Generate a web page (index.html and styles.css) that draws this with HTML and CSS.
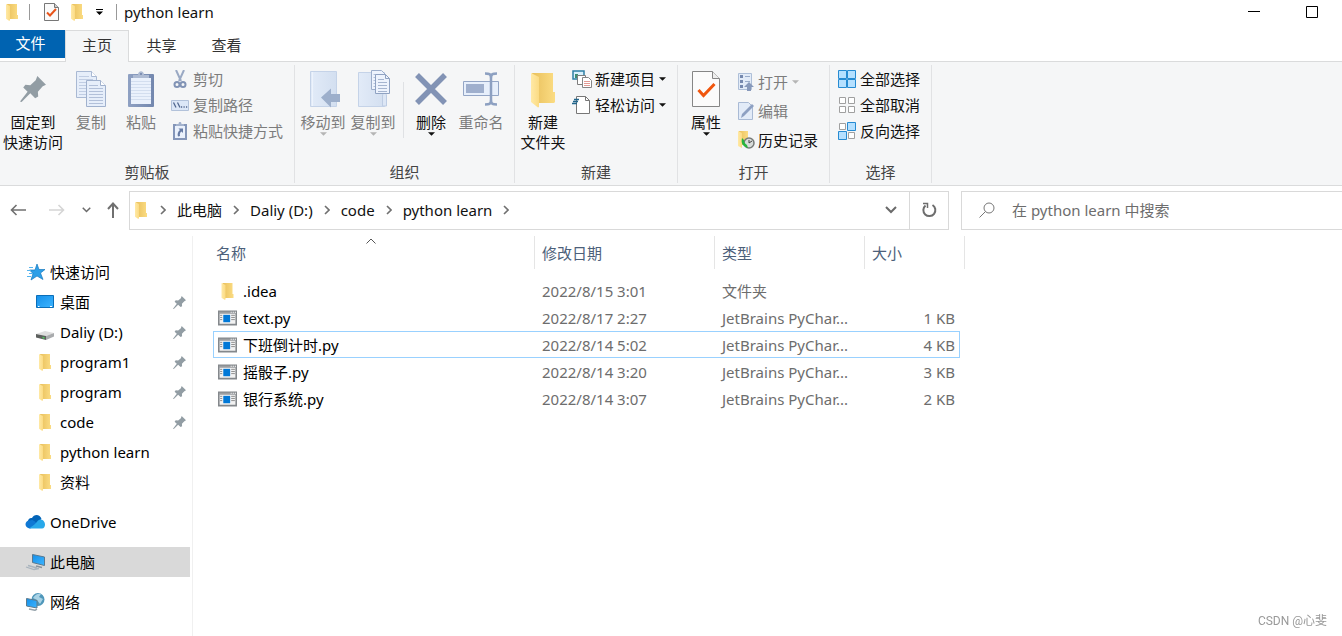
FILE: index.html
```html
<!DOCTYPE html>
<html lang="zh-CN">
<head>
<meta charset="utf-8">
<title>python learn</title>
<meta name="viewport" content="width=device-width, initial-scale=1">
<link rel="stylesheet" href="styles.css">
</head>
<body>
<svg class="sprite" width="0" height="0" aria-hidden="true">
  <defs>
    <linearGradient id="gFront" x1="0" x2="1"><stop offset="0" stop-color="#ffe9a6"/><stop offset="1" stop-color="#fbdb83"/></linearGradient>
    <linearGradient id="gBack" x1="0" x2="1"><stop offset="0" stop-color="#e9c05c"/><stop offset="1" stop-color="#fbdc83"/></linearGradient>
    <linearGradient id="gBlue" x1="0" y1="0" x2="1" y2="1"><stop offset="0" stop-color="#1590ea"/><stop offset="1" stop-color="#3cb4ff"/></linearGradient>
    <linearGradient id="gPale" x1="0" x2="1"><stop offset="0" stop-color="#e2ebf8"/><stop offset="1" stop-color="#d3dff0"/></linearGradient>
    <linearGradient id="gClip" x1="0" x2="1"><stop offset="0" stop-color="#8fa1c3"/><stop offset="1" stop-color="#7387ae"/></linearGradient>
    <symbol id="folder" viewBox="0 0 14 18">
      <path d="M2 1h10v11h1v4H4z" fill="url(#gBack)"/>
      <path d="M1 1l4 2v14.500l-1 .3-3-2z" fill="url(#gFront)"/>
    </symbol>
    <symbol id="pin" viewBox="0 0 24 24">
      <path d="M16 0l8 8-3 1.500-4.500 5 .3 4.500-2.800 1.500-4.500-4.500L1.500 24 0 23.500l7-9L3 10.500l2-2.500 4.500.5 5-4.500z" fill="#929da4"/>
    </symbol>
    <symbol id="pyfile" viewBox="0 0 18 14">
      <path d="M.75.75h16.500v12.500H.75z" fill="#f2f2f2" stroke="#84888c" stroke-width="1.500"/>
      <path d="M1 1h16v2H1z" fill="#9b9ea1"/><path d="M12 1h1v1h-1zm2 0h1v1h-1zm2 0h1v1h-1z" fill="#fff"/>
      <path d="M5 4h6.500v7H5z" fill="#0078d7"/>
      <path d="M2 4.500h2M2 6.500h2M2 8.500h2M12.500 4.500H16M12.500 6.500H16M12.500 8.500H16" stroke="#8c8c8c" stroke-width=".9"/>
    </symbol>
    <symbol id="caret" viewBox="0 0 8 4"><path d="M0 0h8L4 4z" fill="currentColor"/></symbol>
    <symbol id="right" viewBox="0 0 6 10"><path d="M1 1l4 4-4 4" fill="none" stroke="#707070" stroke-width="1.600"/></symbol>
    <symbol id="down" viewBox="0 0 12 8"><path d="M1 1l5 5 5-5" fill="none" stroke="#6a6a6a" stroke-width="2"/></symbol>
    <symbol id="check" viewBox="0 0 28 36">
      <path d="M.5.500h20l7 7v28H.5z" fill="#fbfbfb" stroke="#868686"/><path d="M20.500.500v7h7" fill="#eee" stroke="#868686"/>
      <path d="M6.500 19l5 5.500L22.500 13" fill="none" stroke="#f0560e" stroke-width="3"/>
    </symbol>
  </defs>
</svg>

<header class="titlebar">
  <svg class="folder-icon title-folder" aria-hidden="true"><use href="#folder"/></svg>
  <span class="title-sep first-sep"></span>
  <button class="quick" aria-label="属性"><svg width="15" height="18" viewBox="0 0 15 18"><path d="M.5.500h10l4 4v13H.5z" fill="#fafafa" stroke="#777"/><path d="M10.500.500v4h4" fill="#ccc" stroke="#777"/><path d="M3 9.500l3 3 6-6.500" fill="none" stroke="#e8541a" stroke-width="2"/></svg></button>
  <button class="quick quick-folder" aria-label="新建文件夹"><svg class="folder-icon"><use href="#folder"/></svg></button>
  <button class="quick" aria-label="自定义快速访问工具栏"><svg width="7" height="6" viewBox="0 0 7 6"><path d="M0 0h7v1H0zM0 2.500h7L3.500 6z"/></svg></button>
  <span class="title-sep last-sep"></span>
  <h1 class="title">python learn</h1>
  <div class="window-controls">
    <button aria-label="最小化"><svg width="12" height="12"><path d="M0 5.500h12" stroke="#000"/></svg></button>
    <button aria-label="最大化"><svg width="12" height="12"><path d="M.5.500h11v11H.5z" fill="none" stroke="#000"/></svg></button>
  </div>
</header>

<nav class="tabs">
  <button class="tab file">文件</button>
  <button class="tab active">主页</button>
  <button class="tab">共享</button>
  <button class="tab">查看</button>
</nav>

<section class="ribbon">
  <div class="group">
    <div class="tools">
      <button class="big wide"><span class="pic"><svg width="26" height="26" viewBox="0 0 24 24"><use href="#pin"/></svg></span><span>固定到<br>快速访问</span></button>
      <button class="big off"><span class="pic"><svg width="30" height="38" viewBox="0 0 30 38">
        <path d="M.5 1.500h15l5 5v21H.5z" fill="#e6eefa" stroke="#a9b9d3"/><path d="M15.500 1.500v5h5" fill="#fff" stroke="#a9b9d3"/>
        <path d="M3 6.500h10M3 9.500h14M3 12.500h14M3 15.500h7M3 18.500h7M3 21.500h7M3 24.500h7" stroke="#c0cde3"/>
        <path d="M10.500 10.500h14l5 5v21h-19z" fill="#e6eefa" stroke="#a0b1cd"/><path d="M24.500 10.500v5h5" fill="#fff" stroke="#a0b1cd"/>
        <path d="M13 15.500h9M13 18.500h14M13 21.500h14M13 24.500h14M13 27.500h14M13 30.500h14M13 33.500h14" stroke="#b2c0d9"/></svg></span><span>复制</span></button>
      <button class="big off"><span class="pic"><svg width="28" height="38" viewBox="0 0 28 38">
        <rect x="1" y="4" width="26" height="33" rx="1" fill="url(#gClip)"/><path d="M4 8h20v26H4z" fill="#eaf1fc"/>
        <path d="M4 11.500h20M4 14.500h20M4 17.500h20M4 20.500h20M4 23.500h20M4 26.500h20M4 29.500h20" stroke="#d3deef"/>
        <path d="M6 8V5h5c0-5 6-5 6 0h5v3z" fill="#aebbd3"/><circle cx="14" cy="4" r="1" fill="#6f82a8"/></svg></span><span>粘贴</span></button>
      <div class="small-list clip-list">
        <button class="small off"><svg width="18" height="18" viewBox="0 0 18 18"><path d="M5 0l5 11M13 0L8 11" stroke="#9aa9c4" stroke-width="2" fill="none"/><circle cx="6" cy="14.500" r="2.500" fill="none" stroke="#8193b5" stroke-width="2"/><circle cx="12" cy="14.500" r="2.500" fill="none" stroke="#8193b5" stroke-width="2"/></svg>剪切</button>
        <button class="small off"><svg width="18" height="18" viewBox="0 0 18 18"><path d="M.5 4.500h17v10H.5z" fill="#dce7f7" stroke="#b2c2da"/><path d="M2.500 6.500l2.500 5M6.500 6.500l2.500 5M10 11h1.200M12.500 11h1.200M15 11h1.200" stroke="#51678f" stroke-width="1.300"/></svg>复制路径</button>
        <button class="small off"><svg width="18" height="18" viewBox="0 0 18 18"><path d="M2 2h14v16H2z" fill="#8496b9"/><path d="M4 4h10v12H4z" fill="#eaf1fc"/><path d="M5 4V2h2.500c0-3 3-3 3 0H13v2z" fill="#a3b2cd"/><path d="M7.500 6.500H12V11l-1.500-1.500c-1.500 1-2 2.500-1.500 4.500L7 14.500c-1-2.500 0-5 2-6.500z" fill="#667ba4"/></svg>粘贴快捷方式</button>
      </div>
    </div>
    <div class="group-name">剪贴板</div>
  </div>

  <div class="group">
    <div class="tools">
      <button class="big off"><span class="pic"><svg width="34" height="38" viewBox="0 0 34 38"><path d="M4.500 1.500h26v35h-26z" fill="url(#gPale)" stroke="#c5d3e8"/><path d="M6.500 2v34" stroke="#edf3fc"/><path d="M15 27.500l10-9V24h9v8h-9v5.500z" fill="#9dafcb"/></svg></span><span>移动到</span><svg class="caret"><use href="#caret"/></svg></button>
      <button class="big off"><span class="pic"><svg width="34" height="38" viewBox="0 0 34 38"><path d="M2.500 2.500h26v34h-26z" fill="url(#gPale)" stroke="#c5d3e8"/><path d="M26.500 36V26c0-4 4-4 4 0v10z" fill="#dce6f5" stroke="#bdcce3"/>
        <path d="M15.500.500h10l4 4v15h-14z" fill="#edf3fd" stroke="#9caecb"/><path d="M17.500 4.500h7M17.500 7.500h7M17.500 10.500h7M17.500 13.500h7M17.500 16.500h7" stroke="#b3c1d9"/>
        <path d="M19.500 4.500h10l4 4v15h-14z" fill="#edf3fd" stroke="#8fa2c2"/><path d="M29.500 4.500v4h4" fill="none" stroke="#8fa2c2"/><path d="M22 9.500h6M22 12.500h9M22 15.500h9M22 18.500h9M22 21.500h9" stroke="#a5b5d0"/></svg></span><span>复制到</span><svg class="caret"><use href="#caret"/></svg></button>
      <span class="divider"></span>
      <button class="big"><span class="pic"><svg width="32" height="38" viewBox="0 0 32 38"><path d="M2 5l28 28M30 5L2 33" stroke="#8293b5" stroke-width="5.500"/></svg></span><span>删除</span><svg class="caret"><use href="#caret"/></svg></button>
      <button class="big off"><span class="pic"><svg width="38" height="38" viewBox="0 0 38 38"><path d="M1.500 11.500h35v14h-35z" fill="#e7effb" stroke="#94a6c6"/><path d="M4 14h18v9H4z" fill="#9fafcd"/><path d="M23 3.500c4 0 6 0 6 5v21c0 5-2 5-6 5M35 3.500c-4 0-6 0-6 5M35 34.500c-4 0-6 0-6-5" fill="none" stroke="#8da0c1" stroke-width="2.500"/></svg></span><span>重命名</span></button>
    </div>
    <div class="group-name">组织</div>
  </div>

  <div class="group">
    <div class="tools">
      <button class="big"><span class="pic"><svg width="26" height="38" viewBox="0 0 26 38"><path d="M2 3h21v19h2v10l-1 1H7z" fill="url(#gBack)"/><path d="M1 3l8 4v30l-1 .5L1 32z" fill="url(#gFront)"/></svg></span><span>新建<br>文件夹</span></button>
      <div class="small-list new-list">
        <button class="small"><svg width="20" height="18" viewBox="0 0 20 18"><path d="M1 1h11v8H1z" fill="#d9f0fc" stroke="#2c7fa5" stroke-width="1.500"/><path d="M3 4h3v4H3z" fill="#3d8d73"/><path d="M5.500 5.500h8v9h-8z" fill="#fff" stroke="#7d7d7d"/><path d="M10.500 7.500h6l3 3v7h-9z" fill="#fff" stroke="#858585"/><path d="M12 11.500h6M12 13.500h6M12 15.500h6" stroke="#e39a94"/></svg>新建项目<svg class="caret"><use href="#caret"/></svg></button>
        <button class="small"><svg width="20" height="18" viewBox="0 0 20 18"><path d="M4.500.500h9l4 4v13h-13z" fill="#fff" stroke="#777"/><path d="M13.500.500v4h4" fill="none" stroke="#777"/><path d="M2 3.500h5M1 5.500h5M0 7.500h5" stroke="#22668c" stroke-width="1.300"/></svg>轻松访问<svg class="caret"><use href="#caret"/></svg></button>
      </div>
    </div>
    <div class="group-name">新建</div>
  </div>

  <div class="group">
    <div class="tools">
      <button class="big"><span class="pic"><svg width="28" height="36"><use href="#check"/></svg></span><span>属性</span><svg class="caret"><use href="#caret"/></svg></button>
      <div class="small-list open-list">
        <button class="small off"><svg width="18" height="20" viewBox="0 0 18 20"><path d="M1.500 1.500h13v16h-13z" fill="#e2ebf8" stroke="#aebfd8"/><path d="M3 3h3v3H3zM3 8h3v3H3zM3 13h3v3H3z" fill="#7689ae"/><path d="M8 4.500h5M8 9.500h5" stroke="#9aacca"/><path d="M12 10l5 5h-3v4h-4v-4H7z" fill="#8799bb"/></svg>打开<svg class="caret"><use href="#caret"/></svg></button>
        <button class="small off"><svg width="18" height="20" viewBox="0 0 18 20"><path d="M1.500 1.500h10l4 4v13h-14z" fill="#e2ebf8" stroke="#a9bad5"/><path d="M4 17l1-4L15 3l2 2L7 15z" fill="#8da0c2"/></svg>编辑</button>
        <button class="small"><svg width="18" height="20" viewBox="0 0 18 20"><path d="M2 1h9v14H4z" fill="url(#gBack)"/><path d="M1 1l4 2v15l-4-2z" fill="url(#gFront)"/><circle cx="12" cy="13" r="5" fill="#d8dcda" stroke="#777b79" stroke-width="1.500"/><path d="M12 10v3l3-2" fill="none" stroke="#444"/><path d="M5 8c-1 5 0 8 6 10l-1-3c-2-1-3-3-3-5z" fill="#27b53d"/></svg>历史记录</button>
      </div>
    </div>
    <div class="group-name">打开</div>
  </div>

  <div class="group">
    <div class="tools">
      <div class="small-list select-list">
        <button class="small"><svg width="18" height="18" viewBox="0 0 18 18"><path d="M.5.500h8v8h-8zM9.500.500h8v8h-8zM.5 9.500h8v8h-8zM9.500 9.500h8v8h-8z" fill="#b5e0ff" stroke="#268bd2"/></svg>全部选择</button>
        <button class="small"><svg width="18" height="18" viewBox="0 0 18 18"><path d="M1.500 1.500h6v6h-6zM10.500 1.500h6v6h-6zM1.500 10.500h6v6h-6zM10.500 10.500h6v6h-6z" fill="#fff" stroke="#a0a0a0"/></svg>全部取消</button>
        <button class="small"><svg width="18" height="18" viewBox="0 0 18 18"><path d="M1.500 1.500h6v6h-6zM10.500 10.500h6v6h-6z" fill="#fff" stroke="#a0a0a0"/><path d="M9.500.500h8v8h-8zM.5 9.500h8v8h-8z" fill="#b5e0ff" stroke="#268bd2"/></svg>反向选择</button>
      </div>
    </div>
    <div class="group-name">选择</div>
  </div>
</section>

<section class="location">
  <div class="nav-buttons">
    <button aria-label="后退"><svg width="16" height="12" viewBox="0 0 16 12"><path d="M1 6h15M6.500 1L1.500 6l5 5" fill="none" stroke="#707070" stroke-width="1.600"/></svg></button>
    <button aria-label="前进"><svg width="16" height="12" viewBox="0 0 16 12"><path d="M0 6h15M9.500 1l5 5-5 5" fill="none" stroke="#d5d5d5" stroke-width="1.600"/></svg></button>
    <button class="recent" aria-label="最近浏览的位置"><svg width="9" height="6"><use href="#down"/></svg></button>
    <button class="up" aria-label="向上"><svg width="12" height="16" viewBox="0 0 12 16"><path d="M6 16V1.500M1 7l5-5.500L11 7" fill="none" stroke="#707070" stroke-width="2"/></svg></button>
  </div>
  <div class="address">
    <svg class="folder-icon" aria-hidden="true"><use href="#folder"/></svg>
    <svg class="chev"><use href="#right"/></svg><a href="#pc">此电脑</a>
    <svg class="chev"><use href="#right"/></svg><a href="#d">Daliy (D:)</a>
    <svg class="chev"><use href="#right"/></svg><a href="#code">code</a>
    <svg class="chev"><use href="#right"/></svg><a href="#learn">python learn</a>
    <svg class="chev"><use href="#right"/></svg>
    <button class="history" aria-label="以前的位置"><svg width="12" height="8"><use href="#down"/></svg></button>
    <button class="refresh" aria-label="刷新"><svg width="16" height="16" viewBox="0 0 16 16"><path d="M4.500 3.500A6 6 0 1 0 11.500 3" fill="none" stroke="#6d6d6d" stroke-width="2"/><path d="M2 1.500h4.500V6" fill="none" stroke="#6d6d6d" stroke-width="1.500"/></svg></button>
  </div>
  <label class="search">
    <svg width="16" height="16" viewBox="0 0 16 16" aria-hidden="true"><circle cx="10" cy="6" r="5" fill="none" stroke="#777"/><path d="M6.500 9.500L.5 15.500" stroke="#777"/></svg>
    <input type="search" aria-label="搜索" placeholder="在 python learn 中搜索">
  </label>
</section>

<main class="content">
  <nav class="sidebar">
    <a class="item root" href="#quick"><svg class="tree" viewBox="0 0 20 18"><path d="M12 1l2 5.500h6L15.500 10l2.500 6.500-6-3.500-6 4 2-6.500L4.500 7H10z" fill="#2c9fe8" stroke="#1979bd" stroke-width=".7"/><path d="M4 4.500h4M2 7.500h4M4 10.500h4M2 13.500h4" stroke="#55b4ee"/></svg>快速访问</a>
    <a class="item" href="#desktop"><svg class="tree" viewBox="0 0 20 18"><path d="M1.500 2.500h17v12h-17z" fill="url(#gBlue)" stroke="#0b6eb8"/><path d="M3 13.500h1.500M15 13.500h2" stroke="#fff"/></svg><span>桌面</span><svg class="pin"><use href="#pin"/></svg></a>
    <a class="item" href="#d"><svg class="tree" viewBox="0 0 20 18"><path d="M1 11l9-3 9 2-8 3z" fill="#dedede"/><path d="M1 11l10 2v4L1 14.500z" fill="#5d605e"/><path d="M11 13l8-3v3.500L11 17z" fill="#a9abad"/><path d="M7.500 14.500l2 .4" stroke="#51cc5c" stroke-width="1.500"/></svg><span>Daliy (D:)</span><svg class="pin"><use href="#pin"/></svg></a>
    <a class="item" href="#p1"><svg class="tree"><use href="#folder"/></svg><span>program1</span><svg class="pin"><use href="#pin"/></svg></a>
    <a class="item" href="#p"><svg class="tree"><use href="#folder"/></svg><span>program</span><svg class="pin"><use href="#pin"/></svg></a>
    <a class="item" href="#code"><svg class="tree"><use href="#folder"/></svg><span>code</span><svg class="pin"><use href="#pin"/></svg></a>
    <a class="item" href="#learn"><svg class="tree"><use href="#folder"/></svg><span>python learn</span></a>
    <a class="item" href="#data"><svg class="tree"><use href="#folder"/></svg><span>资料</span></a>
    <a class="item root spaced" href="#onedrive"><svg class="tree" viewBox="0 0 20 18"><path d="M3 8c0-2 2-3.500 4-3 2-4 8-4 9.500 1L11 11z" fill="#0364b8"/><path d="M5 15.500C-1 15.500-1 7 5 7.500c2-1 3-.5 5 1l3 4z" fill="#0f78d4"/><path d="M4 15.500c3-2 7-5 9-8 4-3 7 1 7 4 0 2-1 4-3 4z" fill="#28a8ea"/></svg>OneDrive</a>
    <a class="item root spaced selected" href="#pc"><svg class="tree" viewBox="0 0 20 18"><path d="M7.500 1.500l12 2.500v8.500l-12-3z" fill="url(#gBlue)" stroke="#587991"/><path d="M11 13l6 1.500" stroke="#87939b" stroke-width="1.500"/><path d="M1 14l8 2.500 5-1M3 12.500l9 2.500" fill="none" stroke="#a8b3bd" stroke-width="1.300"/></svg>此电脑</a>
    <a class="item root spaced" href="#network"><svg class="tree" viewBox="0 0 20 18"><circle cx="13" cy="6.500" r="6.500" fill="#4f97ba"/><path d="M8 5c2-4 6-5 8-4l-2 3 4 2-3 5-3-4z" fill="#a9d2e5"/><path d="M1.500 5.500l10.500 2V15L1.500 13z" fill="url(#gBlue)" stroke="#5c7a8d"/><path d="M4 16l6 1.300 2-1.300" fill="none" stroke="#98a5ad" stroke-width="1.500"/></svg>网络</a>
  </nav>

  <section class="files">
    <table>
      <colgroup><col class="c-name"><col class="c-date"><col class="c-type"><col class="c-size"></colgroup>
      <thead><tr>
        <th><div>名称<svg class="sort" viewBox="0 0 10 6"><path d="M.5 5.500L5 1l4.500 4.500" fill="none" stroke="#555"/></svg></div></th>
        <th><div>修改日期</div></th><th><div>类型</div></th><th><div>大小</div></th>
      </tr></thead>
      <tbody>
        <tr><td><div class="name"><svg><use href="#folder"/></svg>.idea</div></td><td>2022/8/15 3:01</td><td>文件夹</td><td></td></tr>
        <tr><td><div class="name"><svg><use href="#pyfile"/></svg>text.py</div></td><td>2022/8/17 2:27</td><td>JetBrains PyChar...</td><td>1 KB</td></tr>
        <tr class="focused"><td><div class="name"><svg><use href="#pyfile"/></svg>下班倒计时.py</div></td><td>2022/8/14 5:02</td><td>JetBrains PyChar...</td><td>4 KB</td></tr>
        <tr><td><div class="name"><svg><use href="#pyfile"/></svg>摇骰子.py</div></td><td>2022/8/14 3:20</td><td>JetBrains PyChar...</td><td>3 KB</td></tr>
        <tr><td><div class="name"><svg><use href="#pyfile"/></svg>银行系统.py</div></td><td>2022/8/14 3:07</td><td>JetBrains PyChar...</td><td>2 KB</td></tr>
      </tbody>
    </table>
  </section>
</main>
<div class="watermark">CSDN @心斐</div>
</body>
</html>
```

FILE: styles.css
```css
* { box-sizing: border-box; }

body {
  margin: 0;
  min-height: 100vh;
  display: flex;
  flex-direction: column;
  overflow-x: hidden;
  background: #fff;
  color: #111;
  font: 15px/20px "Noto Sans", "Noto Sans CJK SC", sans-serif;
}

button {
  margin: 0;
  padding: 0;
  border: 0;
  background: none;
  color: inherit;
  font: inherit;
}

a { color: inherit; text-decoration: none; }
svg { display: block; flex: none; }
.sprite { position: absolute; }
.folder-icon { width: 14px; height: 18px; }

/* Title bar */
.titlebar {
  display: flex;
  align-items: center;
  height: 30px;
  padding: 0 0 7px 5px;
}
.title-sep { width: 1px; height: 16px; background: #999; }
.first-sep { margin: 0 14px 0 10px; }
.last-sep { margin: 0 7px 0 13px; }
.quick-folder { margin: 0 12px 0 11px; }
.title { margin: 0; font-size: 15px; font-weight: 400; }
.window-controls { display: flex; gap: 46px; margin-left: auto; padding-right: 24px; }

/* Tabs */
.tabs { display: flex; height: 31px; }
.tab { width: 65px; height: 31px; padding-bottom: 2px; color: #333; }
.tab.file { height: 28px; padding-right: 4px; background: #0063b1; color: #fff; }
.tab.active {
  height: 32px;
  width: 64px;
  padding-bottom: 3px;
  border: 1px solid #dadbdc;
  border-bottom: 0;
  background: #f5f6f7;
  z-index: 1;
}

/* Ribbon */
.ribbon {
  display: flex;
  height: 125px;
  padding: 3px 0 2px;
  border: solid #dadbdc;
  border-width: 1px 0;
  background: #f5f6f7;
}
.group {
  display: flex;
  flex-direction: column;
  border-right: 1px solid #e1e2e4;
}
.tools { display: flex; flex: 1; padding: 0 11px 0 3px; }
.group:first-child .tools { padding-left: 0; }
.group:nth-child(2) .tools { padding-right: 8px; }
.group-name { padding-bottom: 1px; text-align: center; color: #444; }
.big {
  display: flex;
  flex-direction: column;
  align-items: center;
  justify-content: flex-start;
  width: 50px;
  white-space: nowrap;
}
.big.wide { width: 66px; }
.pic { display: grid; place-items: center; height: 47px; }
.off { color: #7c7c7c; }
.caret { width: 7px; height: 4px; }
.off .caret { color: #b5b5b5; }
.divider { width: 1px; height: 56px; margin: 17px 2px 0 5px; background: #dfe1e4; }
.small-list { display: flex; flex-direction: column; padding: 1px 0 0 5px; }
.small { display: flex; align-items: center; gap: 3px; height: 26px; white-space: nowrap; }
.small .caret { margin-left: 1px; }
.clip-list .small { gap: 4px; }
.new-list { padding-left: 4px; }
.open-list .small { height: 29px; }
.open-list { padding: 2px 0 0 6px; }
.select-list .small { gap: 4px; }

/* Navigation row */
.location { display: flex; align-items: center; height: 48px; margin-bottom: 2px; }
.nav-buttons { display: flex; align-items: center; flex: none; width: 129px; padding-left: 10px; gap: 23px; }
.nav-buttons .recent { margin-left: -6px; }
.nav-buttons .up { margin-left: -7px; }
.address {
  display: flex;
  align-items: center;
  flex: 1;
  height: 39px;
  padding-left: 4px;
  border: 1px solid #d9d9d9;
  white-space: nowrap;
}
.chev { width: 6px; height: 10px; margin: 0 11px; }
.address .chev:nth-of-type(2) { margin-left: 12px; }
.history { margin-left: auto; padding: 0 12px; }
.refresh { display: grid; place-items: center; width: 39px; height: 100%; border-left: 1px solid #d9d9d9; }
.search {
  display: flex;
  align-items: center;
  flex: none;
  width: 381px;
  height: 39px;
  margin-left: 12px;
  padding-left: 17px;
  gap: 17px;
  border: 1px solid #d9d9d9;
  border-right: 0;
}
.search input { flex: 1; min-width: 0; padding: 0; border: 0; outline: 0; background: none; font: inherit; }
.search input::placeholder { color: #6d6d6d; opacity: 1; }

/* Body */
.content { display: flex; flex: 1; }
.sidebar { flex: none; width: 193px; padding: 21px 2px 0 0; border-right: 1px solid #f0f0f0; }
.item { display: flex; align-items: center; height: 30px; padding: 0 4px 0 35px; color: #000; }
.item.root { padding-left: 25px; }
.item.spaced { margin-top: 10px; }
.item.selected { background: #d9d9d9; }
.tree { width: 20px; height: 18px; margin-right: 5px; }
.pin { width: 13px; height: 13px; margin-left: auto; }

.files { flex: 1; padding-left: 15px; }
table { width: 757px; table-layout: fixed; border-collapse: collapse; }
.c-name { width: 327px; }
.c-date { width: 180px; }
.c-type { width: 150px; }
.c-size { width: 100px; }
th { padding: 0 0 8px; text-align: left; font-weight: 400; color: #4c607a; }
th div { position: relative; height: 33px; padding: 7px 0 0 7px; border-right: 1px solid #e5e5e5; }
th:first-child div { padding-left: 8px; }
.sort { position: absolute; top: 2px; left: 50%; width: 10px; height: 6px; margin-left: -5px; }
td { height: 27px; padding: 0 0 0 7px; color: #6d6d6d; white-space: nowrap; }
td:first-child { padding-left: 10px; }
td:last-child { padding: 0 10px 0 0; text-align: right; }
.name { display: flex; align-items: center; gap: 6px; color: #000; }
.name svg { width: 19px; height: 18px; }
.focused { position: relative; }
.focused::after { content: ""; position: absolute; inset: 0 5px 0 5px; border: 1px solid #99d1ff; pointer-events: none; }

.watermark {
  position: fixed;
  right: 15px;
  bottom: 5px;
  color: #999;
  font-family: Roboto, "Noto Sans CJK SC", sans-serif;
  font-size: 12px;
}
```
